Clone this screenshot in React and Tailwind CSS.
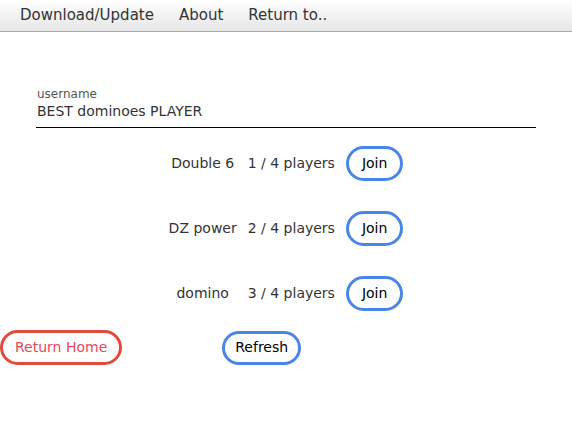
import React from "react";

const rooms = [
  { name: "Double 6", players: 1 },
  { name: "DZ power", players: 2 },
  { name: "domino", players: 3 },
];

const App = () => {
  return (
    <div
      className="min-h-screen bg-white text-[#333]"
      style={{ fontFamily: '"DejaVu Sans", sans-serif' }}
    >
      <nav className="h-[32px] flex items-center gap-[25px] px-[20px] bg-gradient-to-b from-white to-[#e6e6e6] border-b border-[#a9a9a9] text-[15px]">
        <span>Download/Update</span>
        <span>About</span>
        <span>Return to..</span>
      </nav>

      <div className="px-[36px] pt-[55px]">
        <label className="block text-[12px] leading-[14px] text-[#555] pl-[1px]">
          username
        </label>
        <div className="border-b-[1.5px] border-black pl-[1px] pb-[7px] pt-[1px] text-[14px] leading-[18px] text-[#333]">
          BEST dominoes PLAYER
        </div>
      </div>

      <div className="mt-[18px] mx-auto w-fit grid grid-cols-[auto_auto_auto] gap-x-[11px] gap-y-[30px] items-center justify-items-center text-[14px]">
        {rooms.map((room) => (
          <React.Fragment key={room.name}>
            <span>{room.name}</span>
            <span>{room.players} / 4 players</span>
            <button className="h-[35px] px-[13px] rounded-full border-[3px] border-[#4a86e8] text-black bg-white">
              Join
            </button>
          </React.Fragment>
        ))}
      </div>

      <div className="mt-[19px] flex items-center gap-[100px] text-[14px]">
        <button className="h-[35px] px-[12px] rounded-full border-[3px] border-[#e04b3c] text-[#e5485a] bg-white">
          Return Home
        </button>
        <button className="h-[34px] px-[10px] rounded-full border-[3px] border-[#4a86e8] text-black bg-white">
          Refresh
        </button>
      </div>
    </div>
  );
};

export default App;
